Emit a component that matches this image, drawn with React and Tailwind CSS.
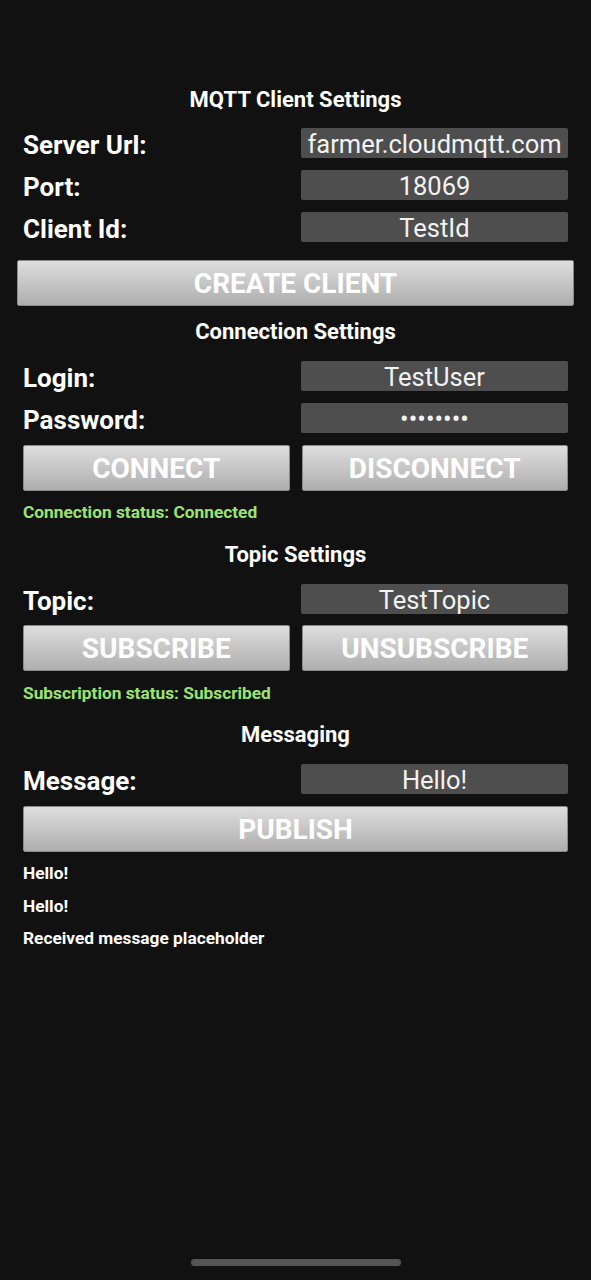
import React from 'react';

const font = { fontFamily: 'Roboto, "Noto Sans", Arial, sans-serif' };

// label + value field row
function FieldRow({ label, value, className = '' }) {
  return (
    <div className={`flex items-center h-[30px] ${className}`}>
      <div className="w-[278px] pt-[3px] text-[26px] font-bold text-white leading-none">{label}</div>
      <div className="flex-1 h-[30px] pt-[3px] bg-[#4e4e4e] rounded-[2px] flex items-center justify-center text-[25.5px] text-[#f2f2f2] leading-none whitespace-nowrap">
        {value}
      </div>
    </div>
  );
}

function Btn({ children, className = '' }) {
  return (
    <div
      className={`h-[46px] pt-[2px] flex items-center justify-center bg-gradient-to-b from-[#dedede] to-[#aeaeae] border border-[#8a8a8a] rounded-[2px] text-white font-bold text-[28px] leading-none ${className}`}
    >
      {children}
    </div>
  );
}

function Title({ children, className = '' }) {
  return (
    <div className={`h-[30px] flex items-center justify-center text-[22px] font-bold text-white ${className}`}>
      {children}
    </div>
  );
}

function Small({ children, className = '', green }) {
  return (
    <div className={`h-[20px] flex items-center text-[17.3px] font-bold ${green ? 'text-[#9be36f]' : 'text-white'} ${className}`}>
      {children}
    </div>
  );
}

export default function App() {
  return (
    <div style={font} className="w-[591px] h-[1280px] bg-[#111111] flex flex-col">
      <div className="flex-1 flex flex-col px-[23px] pt-[84px]">
        {/* client settings */}
        <Title>MQTT Client Settings</Title>
        <FieldRow className="mt-[14px]" label="Server Url:" value="farmer.cloudmqtt.com" />
        <FieldRow className="mt-[12px]" label="Port:" value="18069" />
        <FieldRow className="mt-[12px]" label="Client Id:" value="TestId" />
        <Btn className="mt-[18px] mx-[-6px]">CREATE CLIENT</Btn>

        {/* connection */}
        <Title className="mt-[10px]">Connection Settings</Title>
        <FieldRow className="mt-[15px]" label="Login:" value="TestUser" />
        <FieldRow className="mt-[12px]" label="Password:" value="••••••••" />
        <div className="mt-[12px] grid grid-cols-2 gap-[12px]">
          <Btn>CONNECT</Btn>
          <Btn>DISCONNECT</Btn>
        </div>
        <Small green className="mt-[12px]">Connection status: Connected</Small>

        {/* topic */}
        <Title className="mt-[16px]">Topic Settings</Title>
        <FieldRow className="mt-[15px]" label="Topic:" value="TestTopic" />
        <div className="mt-[11px] grid grid-cols-2 gap-[12px]">
          <Btn>SUBSCRIBE</Btn>
          <Btn>UNSUBSCRIBE</Btn>
        </div>
        <Small green className="mt-[13px]">Subscription status: Subscribed</Small>

        {/* messaging */}
        <Title className="mt-[15px]">Messaging</Title>
        <FieldRow className="mt-[15px]" label="Message:" value="Hello!" />
        <Btn className="mt-[12px]">PUBLISH</Btn>
        <Small className="mt-[12px]">Hello!</Small>
        <Small className="mt-[13px]">Hello!</Small>
        <Small className="mt-[12px]">Received message placeholder</Small>
      </div>
      <div className="h-[36px] flex items-center justify-center">
        <div className="w-[210px] h-[7px] rounded-full bg-[#555555]" />
      </div>
    </div>
  );
}
